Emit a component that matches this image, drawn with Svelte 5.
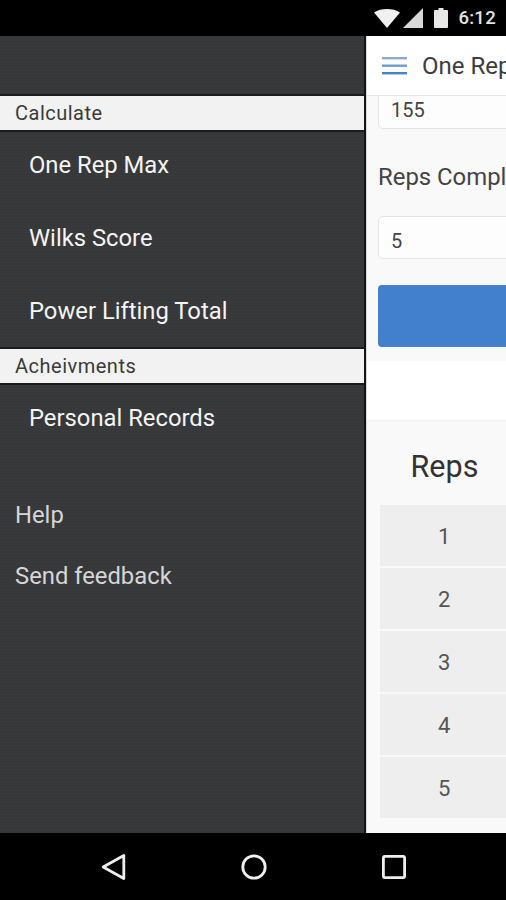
<script>
  const calculate = ['One Rep Max', 'Wilks Score', 'Power Lifting Total'];
  const reps = [1, 2, 3, 4, 5];
</script>

<div class="phone">
  <div class="status">
    <svg class="wifi" width="26" height="19" viewBox="0 0 26 19"><path d="M0 3.500C3.500 1 8 0 13 0s9.500 1 13 3.500L13 19z" fill="#f0f0f0" /></svg>
    <svg class="signal" width="20" height="20" viewBox="0 0 20 20"><path d="M20 0v20H0z" fill="#d8d8d8" /></svg>
    <svg class="battery" width="14" height="20" viewBox="0 0 14 20"><path d="M4.500 0h5v2h3.500a1 1 0 0 1 1 1v16a1 1 0 0 1-1 1H1a1 1 0 0 1-1-1V3a1 1 0 0 1 1-1h3.500z" fill="#e8e8e8" /></svg>
    <span class="time">6:12</span>
  </div>

  <div class="middle">
    <nav class="drawer">
      <div class="drawer-top"></div>
      <div class="section">Calculate</div>
      <div class="items">
        {#each calculate as item}
          <div class="item">{item}</div>
        {/each}
      </div>
      <div class="section">Acheivments</div>
      <div class="items records">
        <div class="item">Personal Records</div>
      </div>
      <div class="links">
        <div class="link">Help</div>
        <div class="link">Send feedback</div>
      </div>
    </nav>

    <main class="content">
      <header class="topbar">
        <svg class="burger" width="25" height="18" viewBox="0 0 25 18">
          <rect y="0" width="25" height="2.400" fill="#8fa8d0" />
          <rect y="7.500" width="25" height="2.400" fill="#6f9bd0" />
          <rect y="15" width="25" height="2.400" fill="#3f85c8" />
        </svg>
        <span class="title">One Rep Max</span>
      </header>

      <section class="form">
        <div class="input first">155</div>
        <div class="label">Reps Completed</div>
        <div class="input">5</div>
        <div class="button"></div>
      </section>

      <section class="results">
        <div class="reps-head">Reps</div>
        {#each reps as rep}
          <div class="rep">{rep}</div>
        {/each}
      </section>
    </main>
  </div>

  <div class="navbar">
    <svg width="25" height="28" viewBox="0 0 25 28"><path d="M22.800 2.500v23L2.200 14z" fill="none" stroke="#eee" stroke-width="2.800" stroke-linejoin="round" /></svg>
    <svg width="26" height="26" viewBox="0 0 26 26"><circle cx="13" cy="13" r="11.200" fill="none" stroke="#eee" stroke-width="2.800" /></svg>
    <svg width="24" height="24" viewBox="0 0 24 24"><rect x="1.400" y="1.400" width="21.200" height="21.200" rx="1.500" fill="none" stroke="#eee" stroke-width="2.800" /></svg>
  </div>
</div>

<style>
  :global(body) {
    margin: 0;
    background: #000;
  }

  .phone {
    width: 506px;
    height: 900px;
    display: flex;
    flex-direction: column;
    overflow: hidden;
    font-family: Roboto, "Liberation Sans", sans-serif;
  }

  .status {
    height: 36px;
    flex: none;
    background: #000;
    display: flex;
    align-items: center;
    justify-content: flex-end;
    padding-right: 10px;
    box-sizing: border-box;
  }

  .wifi {
    margin-right: 3px;
  }

  .signal {
    margin-right: 11px;
  }

  .battery {
    margin-right: 10px;
  }

  .time {
    color: #e4e4e4;
    font-size: 18.500px;
    font-weight: 500;
    letter-spacing: 0.3px;
  }

  .middle {
    height: 797px;
    flex: none;
    display: flex;
  }

  .drawer {
    width: 366px;
    flex: none;
    box-sizing: border-box;
    border-right: 2px solid #141414;
    display: flex;
    flex-direction: column;
    background-color: #37383a;
    background-image:
      repeating-linear-gradient(90deg, rgba(0, 0, 0, 0.025) 0 1px, transparent 1px 3px),
      repeating-linear-gradient(0deg, rgba(255, 255, 255, 0.012) 0 1px, transparent 1px 3px);
  }

  .drawer-top {
    height: 58px;
  }

  .section {
    height: 34px;
    border-top: 2px solid #1c1c1d;
    border-bottom: 2px solid #1c1c1d;
    background: #f2f2f2;
    color: #3a3a3a;
    font-size: 20px;
    line-height: 34px;
    padding-left: 15px;
    letter-spacing: 0.5px;
  }

  .items {
    display: flex;
    flex-direction: column;
    gap: 33px;
    padding: 13px 0 16px;
  }

  .items.records {
    padding-top: 13px;
  }

  .item {
    height: 40px;
    line-height: 40px;
    padding-left: 29px;
    color: #f4f4f4;
    font-size: 23.800px;
  }

  .links {
    margin-top: 31px;
  }

  .link {
    height: 61px;
    line-height: 61px;
    padding-left: 15px;
    color: #d6d6d6;
    font-size: 23.800px;
  }

  .content {
    flex: 1;
    min-width: 0;
    background: #fff;
    border-left: 1px solid #d8d8d8;
    overflow: hidden;
    box-sizing: border-box;
  }

  .topbar {
    height: 59px;
    display: flex;
    align-items: center;
    padding-left: 15px;
    border-bottom: 1px solid #e6e6e6;
    white-space: nowrap;
  }

  .burger {
    flex: none;
    margin-right: 15px;
  }

  .title {
    color: #3c3c3c;
    font-size: 24px;
  }

  .form {
    height: 265px;
    background: #f9f9f9;
    padding-left: 11px;
    box-sizing: border-box;
  }

  .input {
    width: 200px;
    height: 43px;
    box-sizing: border-box;
    background: #fdfdfd;
    border: 1px solid #e4e4e4;
    border-radius: 5px;
    color: #444;
    font-size: 20px;
    line-height: 48px;
    padding-left: 12px;
  }

  .input.first {
    height: 33px;
    line-height: 28px;
    border-top: none;
    border-top-left-radius: 0;
    border-top-right-radius: 0;
  }

  .label {
    height: 87px;
    line-height: 97px;
    color: #444;
    font-size: 23.900px;
    white-space: nowrap;
  }

  .button {
    width: 200px;
    height: 62px;
    margin-top: 26px;
    background: #427fcc;
    border-radius: 4px;
  }

  .results {
    margin-top: 59px;
    height: 413px;
    background: #f9f9f9;
    border-top: 1px solid #f2f2f2;
    padding-left: 13px;
    box-sizing: border-box;
  }

  .reps-head {
    width: 129px;
    height: 84px;
    line-height: 92px;
    text-align: center;
    color: #333;
    font-size: 30.500px;
  }

  .rep {
    width: 200px;
    height: 61px;
    margin-bottom: 2px;
    background: #eeeeee;
    color: #555;
    font-size: 22px;
    line-height: 63px;
    text-indent: 58px;
  }

  .navbar {
    flex: 1;
    background: #000;
    display: flex;
    align-items: center;
    padding-left: 101px;
    gap: 115px;
  }
</style>
